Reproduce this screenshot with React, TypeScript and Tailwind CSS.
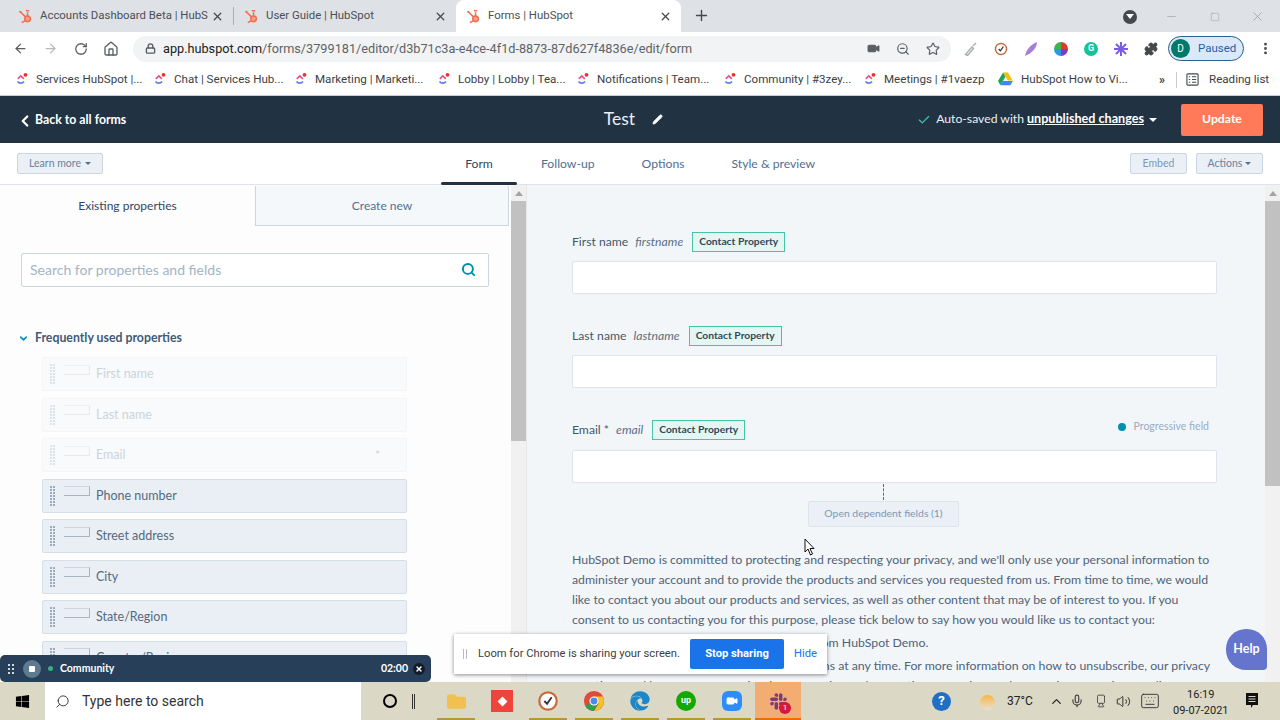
import {
  ArrowLeft,
  ArrowRight,
  RotateCw,
  Home,
  Lock,
  Video,
  ZoomOut,
  Star,
  X,
  Plus,
  Puzzle,
  MoreVertical,
  Minus,
  Search,
  ChevronLeft,
  ChevronDown,
  ChevronUp,
  Pencil,
  Check,
  Mic,
  Volume2,
  Keyboard,
  Square,
} from "lucide-react";
import { FaWindows, FaEdge, FaSlack, FaFolder } from "react-icons/fa";

const tabs = [
  { title: "Accounts Dashboard Beta | HubS", width: "w-[225px]", active: false },
  { title: "User Guide | HubSpot", width: "w-[222px]", active: false },
  { title: "Forms | HubSpot", width: "w-[225px]", active: true },
];

const bookmarks = [
  { label: "Services HubSpot |...", width: "w-[138px]" },
  { label: "Chat | Services Hub...", width: "w-[141px]" },
  { label: "Marketing | Marketi...", width: "w-[143px]" },
  { label: "Lobby | Lobby | Tea...", width: "w-[139px]" },
  { label: "Notifications | Team...", width: "w-[147px]" },
  { label: "Community | #3zey...", width: "w-[140px]" },
  { label: "Meetings | #1vaezp", width: "w-[135px]" },
];

const properties = [
  { label: "First name", disabled: true },
  { label: "Last name", disabled: true },
  { label: "Email", disabled: true, required: true },
  { label: "Phone number" },
  { label: "Street address" },
  { label: "City" },
  { label: "State/Region" },
  { label: "Country/Region" },
];

function Sprocket() {
  return (
    <svg viewBox="0 0 16 16" className="h-[15px] w-[15px] shrink-0" fill="none" stroke="#ef6f50" strokeWidth="1.6">
      <circle cx="10.2" cy="10.5" r="3" fill="#f6a08a" />
      <path d="M10.2 7.5V3.4M8.4 1.8h3.6M2.6 3.2l5.4 5.2M4 14.6l4-2.2" />
      <circle cx="2.4" cy="3" r="1.2" fill="#ef6f50" stroke="none" />
    </svg>
  );
}

function ClickUp() {
  return (
    <svg viewBox="0 0 14 14" className="h-[14px] w-[14px] shrink-0" fill="none" strokeWidth="1.7">
      <path d="M2.5 9.5a4 4 0 0 0 6.5 0" stroke="#5b7fe8" />
      <path d="M2.8 6.8 5.8 4l3 2.8" stroke="#e94f8a" />
      <circle cx="10.5" cy="2.8" r="1.9" fill="#e5342b" stroke="none" />
    </svg>
  );
}

function Drive() {
  return (
    <svg viewBox="0 0 16 14" className="h-[14px] w-[15px] shrink-0">
      <path d="M5.4 0h5.2l5 8.6h-5.2z" fill="#fbbc04" />
      <path d="M5.4 0 0 9.2l2.6 4.5 5.3-9.2z" fill="#1ea362" />
      <path d="M5.2 9.2h10.6l-2.6 4.5H2.6z" fill="#4285f4" />
    </svg>
  );
}

function ChromeLogo() {
  return (
    <svg viewBox="0 0 24 24" className="h-[22px] w-[22px]">
      <circle cx="12" cy="12" r="11" fill="#e04a3a" />
      <path d="M12 12 2.5 17.5A11 11 0 0 0 12 23l5-8z" fill="#2f9e4f" />
      <path d="M12 7h9.5A11 11 0 0 1 12 23l5-8z" fill="#f6c026" />
      <circle cx="12" cy="12" r="5" fill="#fff" />
      <circle cx="12" cy="12" r="3.8" fill="#4a8bf0" />
    </svg>
  );
}

function ClockCheck({ size = "h-[22px] w-[22px]" }: { size?: string }) {
  return (
    <svg viewBox="0 0 24 24" className={size} fill="none">
      <circle cx="12" cy="12" r="9.5" stroke="#c96a3c" strokeWidth="2.4" fill="#fff" />
      <path d="m8 12 3 3 5-7" stroke="#333" strokeWidth="2" />
    </svg>
  );
}

function Grip({ light }: { light?: boolean }) {
  return (
    <div className={`grid w-[5px] grid-cols-2 gap-x-px gap-y-px ${light ? "opacity-30" : ""}`}>
      {Array.from({ length: 14 }).map((_, i) => (
        <span key={i} className="h-[2px] w-[2px] bg-[#99acc2]" />
      ))}
    </div>
  );
}

function PropertyRow({ label, disabled, required }: { label: string; disabled?: boolean; required?: boolean }) {
  return (
    <div
      className={`flex h-[34px] shrink-0 items-center rounded-[2px] border pl-[7px] pr-[26px] ${
        disabled ? "border-[#f3f5f7] bg-[#f8fafb]" : "border-[#d5dfe8] bg-[#e9eff5]"
      }`}
    >
      <Grip light={disabled} />
      <div
        className={`mb-[9px] ml-[9px] h-[10px] w-[26px] border border-l-0 ${
          disabled ? "border-[#e6eaee] border-t-[#f0f2f5]" : "border-[#a9b6c2] border-t-[#cdd6df]"
        }`}
      />
      <span className={`ml-[6px] text-[12.5px] ${disabled ? "text-[#ccd4dc]" : "text-[#566a7e]"}`}>{label}</span>
      {required && <span className="ml-auto text-[12px] text-[#ccd4dc]">*</span>}
    </div>
  );
}

function FormField({
  label,
  name,
  extra,
  gap,
}: {
  label: string;
  name: string;
  extra?: boolean;
  gap: string;
}) {
  return (
    <div className={gap}>
      <div className="flex h-[20px] w-[645px] items-center text-[12.2px] text-[#44586b]">
        <span>{label}</span>
        <span className="ml-[7px] italic text-[#5b6f82]">{name}</span>
        <span className="ml-[9px] flex h-[20px] w-[93px] items-center justify-center border border-[#45c4a8] bg-[#e5f5f1] text-[10.3px] font-bold text-[#33475b]">
          Contact Property
        </span>
        {extra && (
          <span className="ml-auto mb-[6px] flex items-center pr-[8px] text-[10.5px] text-[#99acc2]">
            <span className="mr-[8px] h-[8px] w-[8px] rounded-full bg-[#0091ae]" />
            Progressive field
          </span>
        )}
      </div>
      <div className={`${extra ? "mt-[10px]" : "mt-[9px]"} h-[33px] w-[645px] rounded-[2px] border border-[#dfe3eb] bg-white`} />
    </div>
  );
}

function Scrollbar({ thumb }: { thumb: string }) {
  return (
    <div className="flex w-[15px] shrink-0 flex-col items-center bg-[#f1f1f1]">
      <div className="mt-[6px] h-0 w-0 border-x-[4px] border-b-[5px] border-x-transparent border-b-[#a3a3a3]" />
      <div className={`mt-[5px] w-full bg-[#c1c1c1] ${thumb}`} />
    </div>
  );
}

function BrowserChrome() {
  return (
    <div className="font-['Roboto',sans-serif] text-[#3c4043]">
      <div className="flex h-[32px] items-end bg-[#dee1e6] pl-[8px]">
        {tabs.map((t, i) => (
          <div key={t.title} className="flex h-[32px] items-center">
            <div
              className={`flex h-[32px] items-center pl-[10px] pr-[9px] ${t.width} ${t.active ? "rounded-t-[8px] bg-white" : ""}`}
            >
              <Sprocket />
              <span className="ml-[7px] flex-1 whitespace-nowrap text-[11.4px] text-[#4b4f54]">{t.title}</span>
              <X size={13} strokeWidth={2.4} className="text-[#45494e]" />
            </div>
            {i === 0 && <div className="h-[18px] w-px bg-[#a9adb2]" />}
          </div>
        ))}
        <Plus size={17} strokeWidth={2} className="mb-[8px] ml-[12px] text-[#45494e]" />
        <div className="mb-[8px] ml-auto flex items-center pr-[15px]">
          <span className="flex h-[14px] w-[14px] items-center justify-center rounded-full bg-[#45494e]">
            <span className="h-0 w-0 border-x-[4px] border-t-[5px] border-x-transparent border-t-white" />
          </span>
          <Minus size={13} strokeWidth={1} className="ml-[28px] text-[#8a8d91]" />
          <Square size={10} strokeWidth={1} className="ml-[32px] text-[#8a8d91]" />
          <X size={15} strokeWidth={1} className="ml-[30px] text-[#8a8d91]" />
        </div>
      </div>

      <div className="flex h-[32px] items-center bg-white pl-[13px] pt-px">
        <ArrowLeft size={15} strokeWidth={2} className="text-[#5a5e63]" />
        <ArrowRight size={15} strokeWidth={2} className="ml-[15px] text-[#b5b8bc]" />
        <RotateCw size={14} strokeWidth={2.2} className="ml-[16px] text-[#5a5e63]" />
        <Home size={16} strokeWidth={2} className="ml-[15px] text-[#5a5e63]" />
        <div className="ml-[14px] flex h-[26px] w-[818px] items-center rounded-full bg-[#f1f3f4] pl-[12px] pr-[11px]">
          <Lock size={11} strokeWidth={3} className="text-[#5a5e63]" />
          <span className="ml-[7px] text-[12.7px] text-[#202124]">
            app.hubspot.com<span className="text-[#5f6368]">/forms/3799181/editor/d3b71c3a-e4ce-4f1d-8873-87d627f4836e/edit/form</span>
          </span>
          <Video size={13} className="ml-auto fill-[#5a5e63] text-[#5a5e63]" />
          <ZoomOut size={14} className="ml-[16px] text-[#5a5e63]" />
          <Star size={14} strokeWidth={2} className="ml-[16px] text-[#5a5e63]" />
        </div>
        <div className="ml-[13px] flex items-center gap-[16px]">
          <svg viewBox="0 0 14 14" className="h-[14px] w-[14px]" fill="none" stroke="#a9adb2" strokeWidth="1.4">
            <path d="M1.5 12.5 8 5l1.5 1.5-6 7zM9 4l3-3" />
          </svg>
          <ClockCheck size="h-[14px] w-[14px]" />
          <svg viewBox="0 0 14 14" className="h-[14px] w-[14px]">
            <path d="M1 14C2 8 7 2 13 0c0 6-5 11-12 14z" fill="#a47fd8" />
          </svg>
          <svg viewBox="0 0 14 14" className="h-[14px] w-[14px]">
            <path d="M7 0a7 7 0 0 1 7 7H7z" fill="#e8362c" />
            <path d="M14 7a7 7 0 0 1-7 7V7z" fill="#7b3fc4" />
            <path d="M7 14a7 7 0 0 1-7-7h7z" fill="#2c9ad8" />
            <path d="M0 7a7 7 0 0 1 7-7v7z" fill="#3cb54a" />
          </svg>
          <span className="flex h-[14px] w-[14px] items-center justify-center rounded-full bg-[#15c39a] text-[9px] font-bold text-white">G</span>
          <svg viewBox="0 0 14 14" className="h-[14px] w-[14px]" stroke="#7c5ce6" strokeWidth="2">
            <path d="M7 0v14M0 7h14M2 2l10 10M12 2 2 12" />
          </svg>
          <Puzzle size={14} className="fill-[#45494e] text-[#45494e]" />
        </div>
        <div className="ml-[10px] flex h-[25px] w-[76px] items-center rounded-full border border-[#27608f] bg-[#dbe8f8] pl-[2px]">
          <span className="flex h-[19px] w-[19px] items-center justify-center rounded-full bg-[#00796b] text-[10px] text-white">D</span>
          <span className="ml-[8px] text-[11.5px] text-[#1f5fa8]">Paused</span>
        </div>
        <MoreVertical size={15} strokeWidth={2.6} className="ml-[14px] text-[#45494e]" />
      </div>

      <div className="flex h-[32px] items-center border-b border-[#c9ccd0] bg-white pl-[15px] text-[11.6px] text-[#3c4043]">
        {bookmarks.map((b) => (
          <div key={b.label} className={`flex items-center gap-[7px] whitespace-nowrap ${b.width}`}>
            <ClickUp />
            <span>{b.label}</span>
          </div>
        ))}
        <div className="flex w-[161px] items-center gap-[8px] whitespace-nowrap">
          <Drive />
          <span>HubSpot How to Vi...</span>
        </div>
        <span className="text-[12px] font-bold leading-none">»</span>
        <div className="ml-[11px] h-[16px] w-px bg-[#c9ccd0]" />
        <svg viewBox="0 0 14 14" className="ml-[9px] h-[13px] w-[13px]" fill="none" stroke="#45494e" strokeWidth="1.2">
          <rect x="1" y="1" width="12" height="12" rx="1" />
          <path d="M3 4h1.5M3 7h1.5M3 10h1.5M6.5 4H11M6.5 7H11M6.5 10H11" />
        </svg>
        <span className="ml-[10px] whitespace-nowrap">Reading list</span>
      </div>
    </div>
  );
}

function HubSpotHeader() {
  return (
    <>
      <div className="flex h-[47px] shrink-0 items-center justify-between bg-[#213343] pl-[16px] pr-[17px] text-white">
        <div className="flex w-[488px] items-center pt-[2px] text-[12.3px] font-bold">
          <ChevronLeft size={18} strokeWidth={3} className="mr-px" />
          Back to all forms
        </div>
        <div className="flex items-center text-[17.5px] text-[#eaf0f6]">
          Test
          <Pencil size={11} strokeWidth={2} className="ml-[17px] fill-white" />
        </div>
        <div className="flex w-[500px] items-center justify-end text-[12.2px]">
          <Check size={14} strokeWidth={2} className="mr-[5px] text-[#3ec8a8]" />
          <span className="text-[#eaf0f6]">Auto-saved with</span>
          <span className="ml-[3px] text-[12.6px] font-bold underline">unpublished changes</span>
          <span className="ml-[5px] h-0 w-0 border-x-[4px] border-t-[4px] border-x-transparent border-t-white" />
          <span className="ml-[24px] flex h-[32px] w-[82px] items-center justify-center rounded-[2px] bg-[#ff7a59] font-bold text-white">Update</span>
        </div>
      </div>

      <div className="flex h-[42px] shrink-0 items-center border-b border-[#dfe3eb] bg-white pl-[17px] pr-[17px]">
        <button className="flex h-[21px] w-[86px] items-center justify-center rounded-[2px] border border-[#cbd6e2] bg-[#eaf0f6] text-[10.5px] text-[#6b829b]">
          Learn more
          <span className="ml-[4px] h-0 w-0 border-x-[3px] border-t-[3px] border-x-transparent border-t-[#516f90]" />
        </button>
        <nav className="ml-[338px] flex h-full items-stretch pt-px text-[12.2px] text-[#516f90]">
          <a className="relative flex w-[76px] items-center justify-center text-[#33475b]">
            Form
            <span className="absolute inset-x-0 -bottom-px h-[3px] rounded-full bg-[#213343]" />
          </a>
          <a className="ml-[24px] flex items-center">Follow-up</a>
          <a className="ml-[47px] flex items-center">Options</a>
          <a className="ml-[47px] flex items-center">Style &amp; preview</a>
        </nav>
        <button className="ml-auto flex h-[21px] w-[57px] items-center justify-center rounded-[2px] border border-[#cbd6e2] bg-[#eaf0f6] text-[10.5px] text-[#7c98b6]">
          Embed
        </button>
        <button className="ml-[9px] flex h-[21px] w-[67px] items-center justify-center rounded-[2px] border border-[#cbd6e2] bg-[#eaf0f6] text-[10.5px] text-[#6b829b]">
          Actions
          <span className="ml-[3px] h-0 w-0 border-x-[3px] border-t-[3px] border-x-transparent border-t-[#516f90]" />
        </button>
      </div>
    </>
  );
}

function LeftPanel() {
  return (
    <div className="flex w-[527px] shrink-0 overflow-hidden border-r border-[#e5e8eb] bg-[#fdfdfe]">
      <div className="w-[511px] shrink-0">
        <div className="flex h-[41px] pt-px text-[12px]">
          <div className="flex w-[255px] items-center justify-center text-[#33475b]">Existing properties</div>
          <div className="flex w-[254px] items-center justify-center border-x border-b border-[#cbd6e2] bg-[#f5f8fa] text-[#516f90]">Create new</div>
        </div>
        <div className="ml-[21px] mt-[27px] flex h-[34px] w-[468px] items-center justify-between rounded-[2px] border border-[#cbd6e2] bg-white pb-px pl-[8px] pr-[12px]">
          <span className="text-[14px] text-[#a3b4c6]">Search for properties and fields</span>
          <Search size={15} strokeWidth={3.2} className="text-[#0091ae]" />
        </div>
        <div className="ml-[18px] mt-[42px] flex items-center text-[12.3px] font-bold text-[#425b76]">
          <ChevronDown size={11} strokeWidth={3.5} className="mr-[6px] text-[#0091ae]" />
          Frequently used properties
        </div>
        <div className="ml-[42px] mt-[10px] flex w-[365px] flex-col gap-[6.5px]">
          {properties.map((p) => (
            <PropertyRow key={p.label} {...p} />
          ))}
        </div>
      </div>
      <Scrollbar thumb="h-[240px]" />
    </div>
  );
}

function RightPanel() {
  return (
    <div className="flex min-w-0 flex-1 overflow-hidden bg-[#f3f6f9]">
      <div className="w-[738px] shrink-0 pl-[45px]">
        <FormField label="First name" name="firstname" gap="pt-[47px]" />
        <FormField label="Last name" name="lastname" gap="pt-[32px]" />
        <FormField label="Email *" name="email" gap="pt-[32px]" extra />
        <div className="flex w-[645px] flex-col items-center pr-[22px]">
          <div className="mt-px h-[16px] border-l border-dashed border-[#0091ae]" />
          <div className="mt-px flex h-[26px] w-[151px] items-center justify-center rounded-[2px] border border-[#dfe3eb] bg-[#eaf0f6] text-[10.4px] text-[#7c98b6]">
            Open dependent fields (1)
          </div>
        </div>
        <div className="mt-[23px] w-[645px] text-[12.3px] leading-[20px] text-[#4f6378]">
          <p>
            HubSpot Demo is committed to protecting and respecting your privacy, and we'll only use your personal information to
            administer your account and to provide the products and services you requested from us. From time to time, we would
            like to contact you about our products and services, as well as other content that may be of interest to you. If you
            consent to us contacting you for this purpose, please tick below to say how you would like us to contact you:
          </p>
          <p className="mt-[3px] whitespace-nowrap pl-[22px]">I agree to receive other communications from HubSpot Demo.</p>
          <p className="mt-[3px]">
            You can unsubscribe from these communications at any time. For more information on how to unsubscribe, our privacy
            practices, and how we are committed to protecting and respecting your privacy, please review our Privacy Policy.
          </p>
        </div>
      </div>
      <Scrollbar thumb="h-[285px]" />
    </div>
  );
}

function TaskIcon({ children }: { children: React.ReactNode }) {
  return (
    <div className="relative flex h-full w-[46px] items-center justify-center">
      {children}
      <span className="absolute bottom-0 h-[2px] w-[38px] bg-[#b89638]" />
    </div>
  );
}

function Taskbar() {
  return (
    <div className="flex h-[38px] shrink-0 items-center bg-[#dcd8c6] font-['Roboto',sans-serif] text-[#222]">
      <div className="flex w-[45px] justify-center">
        <FaWindows size={15} className="text-black" />
      </div>
      <div className="flex h-full w-[316px] items-center bg-white pl-[10px] text-[14px] text-[#333]">
        <Search size={15} strokeWidth={1.5} className="-scale-x-100" />
        <span className="ml-[12px]">Type here to search</span>
      </div>
      <div className="ml-[22px] h-[14px] w-[14px] rounded-full border-[2px] border-black" />
      <div className="ml-[15px] h-[15px] w-[3px] border-x border-[#333]" />
      <div className="relative ml-[18px] flex h-full w-[46px] items-center justify-center">
        <FaFolder size={19} className="text-[#f1c04f]" />
        <span className="absolute bottom-0 h-[2px] w-[38px] bg-[#b89638]" />
      </div>
      <div className="flex h-full w-[46px] items-center justify-center">
        <span className="flex h-[22px] w-[22px] items-center justify-center bg-[#ef443b]">
          <span className="h-[7px] w-[7px] rotate-45 bg-white" />
        </span>
      </div>
      <TaskIcon>
        <ClockCheck />
      </TaskIcon>
      <TaskIcon>
        <ChromeLogo />
      </TaskIcon>
      <TaskIcon>
        <FaEdge size={20} className="text-[#1b87c9]" />
      </TaskIcon>
      <TaskIcon>
        <span className="flex h-[20px] w-[20px] items-center justify-center rounded-full bg-[#14a800] text-[9px] font-bold text-white">up</span>
      </TaskIcon>
      <TaskIcon>
        <span className="flex h-[20px] w-[20px] items-center justify-center rounded-[6px] bg-[#2d8cff]">
          <Video size={12} className="fill-white text-white" />
        </span>
      </TaskIcon>
      <div className="relative flex h-full w-[46px] items-center justify-center bg-[#f3ad72]">
        <FaSlack size={19} className="text-[#7c3b7a]" />
        <span className="absolute bottom-[6px] right-[10px] flex h-[12px] w-[12px] items-center justify-center rounded-full bg-[#d8173c] text-[8px] text-white">1</span>
        <span className="absolute inset-x-0 bottom-0 h-[2px] bg-[#ef6c00]" />
      </div>
      <span className="ml-[131px] flex h-[19px] w-[19px] items-center justify-center rounded-full bg-[#1f6fc4] text-[13px] font-bold text-white">?</span>
      <span className="ml-[29px] mt-[2px] h-[15px] w-[15px] rounded-full bg-gradient-to-b from-[#f5b53a] to-[#e8e0cc]" />
      <span className="ml-[12px] text-[12px]">37°C</span>
      <ChevronUp size={15} strokeWidth={2} className="ml-[16px]" />
      <Mic size={14} strokeWidth={2} className="ml-[6px] text-[#444]" />
      <Video size={14} strokeWidth={1.5} className="ml-[10px] rotate-90 text-[#444]" />
      <Volume2 size={15} strokeWidth={1.5} className="ml-[8px]" />
      <Keyboard size={20} strokeWidth={1} className="ml-[9px]" />
      <div className="ml-[11px] flex w-[60px] flex-col items-center whitespace-nowrap pt-[3px] text-[11px] leading-[16px]">
        <span>16:19</span>
        <span>09-07-2021</span>
      </div>
      <svg viewBox="0 0 14 16" className="ml-[14px] h-[16px] w-[14px]">
        <path d="M1 0h12v12H8l-2 3v-3H1z" fill="#111" />
        <path d="M3.5 3.5h7M3.5 6h7M3.5 8.5h7" stroke="#dcd8c6" />
      </svg>
    </div>
  );
}

function Overlays() {
  return (
    <>
      <div className="absolute left-0 top-[655px] flex h-[27px] w-[431px] items-center rounded-[5px] bg-[#283f5a] pl-[8px] pr-[6px] text-[10.5px] font-bold text-white">
        <div className="grid grid-cols-2 gap-[2px]">
          {Array.from({ length: 6 }).map((_, i) => (
            <span key={i} className="h-[2px] w-[2px] bg-[#cfd8e3]" />
          ))}
        </div>
        <span className="ml-[9px] flex h-[18px] w-[18px] items-center justify-center rounded-full bg-[#5d7a8e]">
          <span className="h-[6px] w-[6px] rounded-[1px] bg-white" />
        </span>
        <span className="ml-[7px] h-[5px] w-[5px] rounded-full bg-[#36b37e]" />
        <span className="ml-[7px]">Community</span>
        <span className="ml-auto">02:00</span>
        <span className="ml-[5px] flex h-[12px] w-[12px] items-center justify-center rounded-full bg-[#111c2b]">
          <X size={8} strokeWidth={4} />
        </span>
      </div>

      <div className="absolute left-[454px] top-[634px] flex h-[40px] w-[373px] items-center bg-white pl-[9px] font-['Roboto',sans-serif] text-[11.2px] text-[#3c4043] shadow-[0_1px_4px_rgba(0,0,0,0.45)]">
        <span className="h-[10px] w-[4px] shrink-0 border-x border-[#b8bbbf]" />
        <span className="ml-[11px] w-[212px] shrink-0 whitespace-nowrap pt-px">Loom for Chrome is sharing your screen.</span>
        <span className="flex h-[30px] w-[94px] shrink-0 items-center justify-center rounded-[2px] bg-[#1a73e8] pt-px font-bold text-white">Stop sharing</span>
        <span className="ml-[10px] pt-px text-[#1a73e8]">Hide</span>
      </div>

      <div className="absolute left-[1226px] top-[629px] flex h-[41px] w-[41px] items-center justify-center rounded-[20px_20px_4px_20px] bg-[#6574cd] text-[12.5px] font-bold text-white">
        Help
      </div>

      <svg viewBox="0 0 12 18" className="absolute left-[804px] top-[538px] h-[18px] w-[12px]">
        <path d="M1 1v13l3-3 2.5 6 2-1-2.5-5.5H10z" fill="#fff" stroke="#111" strokeWidth="1" />
      </svg>
    </>
  );
}

export default function App() {
  return (
    <div className="relative flex h-[720px] w-[1280px] flex-col overflow-hidden bg-white font-['Lato',sans-serif]">
      <BrowserChrome />
      <HubSpotHeader />
      <div className="flex min-h-0 flex-1">
        <LeftPanel />
        <RightPanel />
      </div>
      <Taskbar />
      <Overlays />
    </div>
  );
}
